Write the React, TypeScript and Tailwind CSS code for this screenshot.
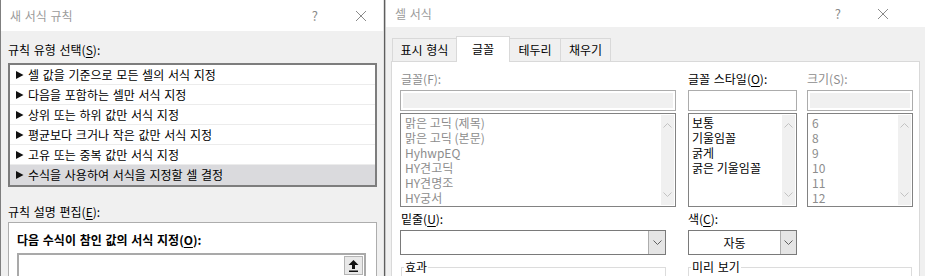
import React from "react";

const rules = [
  "셀 값을 기준으로 모든 셀의 서식 지정",
  "다음을 포함하는 셀만 서식 지정",
  "상위 또는 하위 값만 서식 지정",
  "평균보다 크거나 작은 값만 서식 지정",
  "고유 또는 중복 값만 서식 지정",
  "수식을 사용하여 서식을 지정할 셀 결정",
];
const fonts = ["맑은 고딕 (제목)", "맑은 고딕 (본문)", "HyhwpEQ", "HY견고딕", "HY견명조", "HY궁서"];
const styles = ["보통", "기울임꼴", "굵게", "굵은 기울임꼴"];
const sizes = ["6", "8", "9", "10", "11", "12"];

function CloseIcon() {
  return (
    <svg width="12" height="12" viewBox="0 0 12 12">
      <path d="M1 1 L11 11 M11 1 L1 11" stroke="#8a8a8a" strokeWidth="1" fill="none" />
    </svg>
  );
}

function Chevron({ up = false, color = "#c2c2c2" }: { up?: boolean; color?: string }) {
  return (
    <svg width="9" height="5" viewBox="0 0 9 5">
      <path d={up ? "M0.5 4.5 L4.5 0.5 L8.5 4.5" : "M0.5 0.5 L4.5 4.5 L8.5 0.5"} stroke={color} strokeWidth="1" fill="none" />
    </svg>
  );
}

// 스크롤바 (비활성)
function ScrollTrack() {
  return (
    <div className="w-[13px] bg-[#f0f0f0] flex flex-col items-center justify-between py-[8px] my-[1px] mr-[1px]">
      <Chevron up />
      <Chevron />
    </div>
  );
}

function TitleBar({ title, h, helpX, closeX }: { title: string; h: string; helpX: string; closeX: string }) {
  return (
    <div className={`${h} shrink-0 bg-white flex items-center text-[12px] text-[#9b9b9b] [word-spacing:1px]`}>
      <span className="pl-[9px] flex-1">{title}</span>
      <span className={`${helpX} text-[13px] text-[#8a8a8a]`}>?</span>
      <span className={closeX}>
        <CloseIcon />
      </span>
    </div>
  );
}

export default function App() {
  return (
    <div className="w-[925px] h-[276px] overflow-hidden flex bg-[#f0f0f0] text-[12px] leading-[16px] text-black font-['Noto_Sans_CJK_KR','Noto_Sans',sans-serif]">
      {/* 새 서식 규칙 */}
      <div className="w-[383px] h-full shrink-0 flex flex-col overflow-hidden border-l border-[#7f7f7f] bg-[#f0f0f0]">
        <TitleBar title="새 서식 규칙" h="h-[31px]" helpX="mr-[37px]" closeX="mr-[16px]" />
        <div className="pl-[7px]">
          <div className="pt-[11px] [word-spacing:1px]">
            규칙 유형 선택(<u className="underline-offset-2">S</u>):
          </div>
          <div className="mt-[5px] w-[369px] h-[124px] border-2 border-[#7d7d7d] bg-white">
            {rules.map((r, i) => (
              <div
                key={r}
                className={`h-[20px] flex items-center pl-[6px] [word-spacing:1px] ${
                  i === rules.length - 1 ? "bg-[#dadadd]" : "border-b border-[#ececec]"
                }`}
              >
                <svg width="8" height="8" viewBox="0 0 8 8" className="mr-[4px]">
                  <polygon points="0,0 7.5,4 0,8" fill="#111" />
                </svg>
                {r}
              </div>
            ))}
          </div>
          <div className="mt-[17px] [word-spacing:1px]">
            규칙 설명 편집(<u className="underline-offset-2">E</u>):
          </div>
          <div className="mt-[2px] w-[369px] h-[60px] border border-[#adadad] bg-white pl-[8px] pt-[9px]">
            <div className="font-bold [word-spacing:1px]">
              다음 수식이 참인 값의 서식 지정(<u className="underline-offset-2">O</u>):
            </div>
            <div className="mt-[5px] w-[349px] h-[26px] border-2 border-[#a9a9a9] bg-white flex justify-end items-start pt-[1px] pr-[1px]">
              <div className="w-[19px] h-[19px] bg-[#e8e8e8] border border-[#b4b4b4] flex items-center justify-center">
                <svg width="11" height="12" viewBox="0 0 11 12">
                  <polygon points="5.5,0 10.5,5 7,5 7,9 4,9 4,5 0.5,5" fill="#111" />
                  <rect x="1" y="10.5" width="9" height="1.5" fill="#111" />
                </svg>
              </div>
            </div>
          </div>
        </div>
      </div>

      {/* 경계선 */}
      <div className="w-px shrink-0 bg-[#e2e2e2]" />
      <div className="w-px shrink-0 bg-[#5e5e5e]" />
      <div className="w-px shrink-0 bg-[#c4c4c4]" />

      {/* 셀 서식 */}
      <div className="flex-1 h-full flex flex-col overflow-hidden bg-[#f0f0f0]">
        <TitleBar title="셀 서식" h="h-[27px]" helpX="mr-[36px]" closeX="mr-[36px]" />
        <div className="pt-[9px] flex-1 flex flex-col">
          <div className="flex items-end h-[25px] shrink-0 pl-[6px] [word-spacing:1px]">
            <div className="w-[65px] h-[23px] border border-b-0 border-[#d9d9d9] flex items-center justify-center">표시 형식</div>
            <div className="w-[54px] h-[26px] -ml-px -mb-px relative bg-white border border-b-0 border-[#d9d9d9] flex items-center justify-center pb-[2px]">글꼴</div>
            <div className="w-[52px] h-[23px] -ml-px border border-b-0 border-[#d9d9d9] flex items-center justify-center">테두리</div>
            <div className="w-[51px] h-[23px] -ml-px border border-b-0 border-[#d9d9d9] flex items-center justify-center">채우기</div>
          </div>
          <div className="ml-[5px] w-[529px] flex-1 bg-white border border-[#d9d9d9] pl-[8px] pt-[9px]">
            <div className="flex">
              {/* 글꼴 */}
              <div className="w-[276px]">
                <div className="text-[#8d8d8d] pl-[1px]">글꼴(F):</div>
                <div className="mt-[3px] h-[21px] border border-[#acacac] p-[2px]">
                  <div className="h-full bg-[#f0f0f0]" />
                </div>
                <div className="mt-[2px] h-[94px] border border-[#828282] flex">
                  <div className="flex-1 pl-[4px] pt-[1px] text-[#8d8d8d] leading-[15px]">
                    {fonts.map((f) => (
                      <div key={f}>{f}</div>
                    ))}
                  </div>
                  <ScrollTrack />
                </div>
              </div>
              {/* 글꼴 스타일 */}
              <div className="w-[109px] ml-[12px]">
                <div className="[word-spacing:1px]">
                  글꼴 스타일(<u className="underline-offset-2">O</u>):
                </div>
                <div className="mt-[3px] h-[21px] border border-[#acacac] bg-white" />
                <div className="mt-[2px] h-[94px] border border-[#828282] flex">
                  <div className="flex-1 pl-[3px] pt-[1px] leading-[15px]">
                    {styles.map((s) => (
                      <div key={s}>{s}</div>
                    ))}
                  </div>
                  <ScrollTrack />
                </div>
              </div>
              {/* 크기 */}
              <div className="w-[106px] ml-[10px]">
                <div className="text-[#8d8d8d]">크기(S):</div>
                <div className="mt-[3px] h-[21px] border border-[#acacac] p-[2px]">
                  <div className="h-full bg-[#f0f0f0]" />
                </div>
                <div className="mt-[2px] h-[94px] border border-[#828282] flex">
                  <div className="flex-1 pl-[4px] pt-[1px] text-[#8d8d8d] leading-[15px]">
                    {sizes.map((s) => (
                      <div key={s}>{s}</div>
                    ))}
                  </div>
                  <ScrollTrack />
                </div>
              </div>
            </div>

            <div className="flex mt-[4px]">
              {/* 밑줄 */}
              <div className="w-[266px]">
                <div className="pl-[1px]">
                  밑줄(<u className="underline-offset-2">U</u>):
                </div>
                <div className="mt-[3px] h-[25px] border border-[#7a7a7a] bg-white flex justify-end">
                  <div className="w-[17px] bg-[#e5e5e5] border-l border-[#adadad] flex items-center justify-center">
                    <Chevron color="#606060" />
                  </div>
                </div>
              </div>
              {/* 색 */}
              <div className="w-[109px] ml-[22px]">
                <div>
                  색(<u className="underline-offset-2">C</u>):
                </div>
                <div className="mt-[3px] h-[25px] border border-[#7a7a7a] bg-white flex">
                  <div className="flex-1 flex items-center justify-center">자동</div>
                  <div className="w-[16px] bg-[#e5e5e5] border-l border-[#adadad] flex items-center justify-center">
                    <Chevron color="#606060" />
                  </div>
                </div>
              </div>
            </div>

            <div className="flex mt-[4px]">
              <fieldset className="w-[265px] ml-[1px] h-[40px] border border-[#dcdcdc]">
                <legend className="ml-[2px] px-[1px]">효과</legend>
              </fieldset>
              <fieldset className="w-[224px] ml-[22px] h-[40px] border border-[#dcdcdc]">
                <legend className="ml-[2px] px-[1px] [word-spacing:1px]">미리 보기</legend>
              </fieldset>
            </div>
          </div>
        </div>
      </div>
    </div>
  );
}
